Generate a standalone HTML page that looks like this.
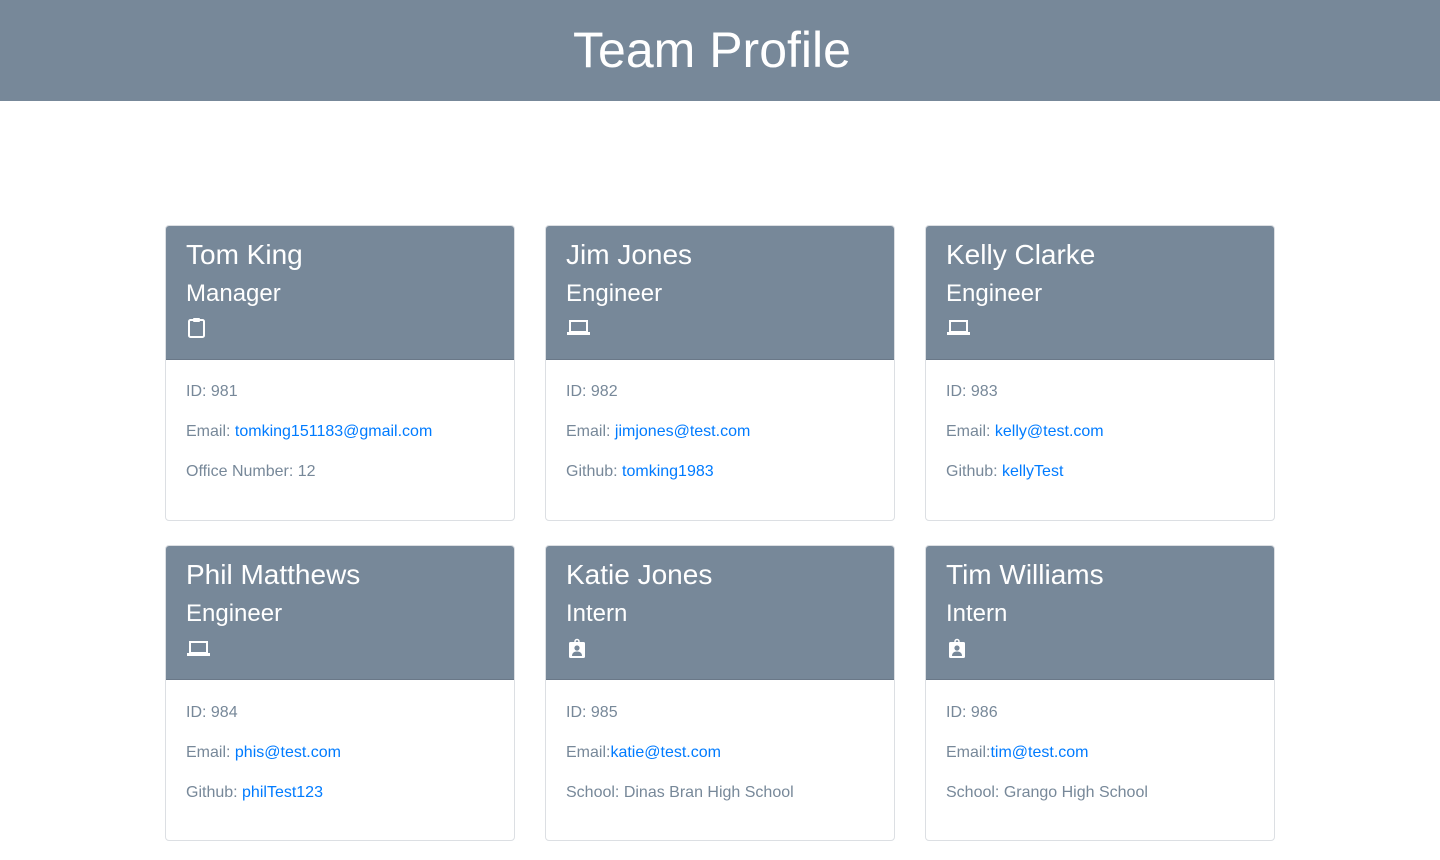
<!DOCTYPE html>
<html><head><meta charset="utf-8"><style>
body{margin:0;font-family:"Liberation Sans",Arial,sans-serif;background:#fff;}
.top{height:101px;background:#778899;color:#fff;text-align:center;font-size:50px;line-height:100px;padding-right:16px;}
.grid{position:relative;}
.card{position:absolute;width:348px;height:294px;border:1px solid #dcdfe3;border-radius:4px;overflow:hidden;}
.hd{background:#778899;color:#fff;height:133px;padding-left:20px;border-bottom:1px solid #6a7888;position:relative;}
.n{position:absolute;top:13px;font-size:28px;}
.r{position:absolute;top:54px;font-size:24px;}
.ic{position:absolute;top:91px;left:21px;}
.bd{padding-left:20px;color:#778899;font-size:16px;position:relative;}
.bd div{position:absolute;left:20px;}
a{color:#007bff;text-decoration:none;}
</style></head><body>
<div class="top">Team Profile</div>
<div class="grid">
<div class="card" style="left:165px;top:124px">
<div class="hd"><div class="n">Tom King</div><div class="r">Manager</div>
<svg class="ic" width="20" height="22" viewBox="0 0 20 22"><rect x="2" y="3" width="15" height="17" rx="1.5" fill="none" stroke="#fff" stroke-width="2"/><rect x="6" y="1" width="7" height="4" rx="1" fill="#fff"/></svg></div>
<div class="bd"><div style="top:23px">ID: 981</div><div style="top:63px">Email: <a>tomking151183@gmail.com</a></div><div style="top:103px">Office Number: 12</div></div></div>
<div class="card" style="left:545px;top:124px">
<div class="hd"><div class="n">Jim Jones</div><div class="r">Engineer</div>
<svg class="ic" width="24" height="20" viewBox="0 0 24 20"><rect x="3" y="4" width="17" height="11" fill="none" stroke="#fff" stroke-width="2"/><rect x="0" y="15" width="23" height="3" fill="#fff"/></svg></div>
<div class="bd"><div style="top:23px">ID: 982</div><div style="top:63px">Email: <a>jimjones@test.com</a></div><div style="top:103px">Github: <a>tomking1983</a></div></div></div>
<div class="card" style="left:925px;top:124px">
<div class="hd"><div class="n">Kelly Clarke</div><div class="r">Engineer</div>
<svg class="ic" width="24" height="20" viewBox="0 0 24 20"><rect x="3" y="4" width="17" height="11" fill="none" stroke="#fff" stroke-width="2"/><rect x="0" y="15" width="23" height="3" fill="#fff"/></svg></div>
<div class="bd"><div style="top:23px">ID: 983</div><div style="top:63px">Email: <a>kelly@test.com</a></div><div style="top:103px">Github: <a>kellyTest</a></div></div></div>
<div class="card" style="left:165px;top:444px">
<div class="hd"><div class="n">Phil Matthews</div><div class="r">Engineer</div>
<svg class="ic" width="24" height="20" viewBox="0 0 24 20" style="top:92px"><rect x="3" y="4" width="17" height="11" fill="none" stroke="#fff" stroke-width="2"/><rect x="0" y="15" width="23" height="3" fill="#fff"/></svg></div>
<div class="bd"><div style="top:24px">ID: 984</div><div style="top:64px">Email: <a>phis@test.com</a></div><div style="top:104px">Github: <a>philTest123</a></div></div></div>
<div class="card" style="left:545px;top:444px">
<div class="hd"><div class="n">Katie Jones</div><div class="r">Intern</div>
<svg class="ic" width="20" height="22" viewBox="0 0 20 22" style="top:92px"><rect x="2" y="4" width="16" height="16" rx="1.5" fill="#fff"/><circle cx="10" cy="3.5" r="2" fill="none" stroke="#fff" stroke-width="1.5"/><circle cx="10" cy="10" r="2.6" fill="#778899"/><path d="M5 18c0-3 2-4.5 5-4.5s5 1.5 5 4.5z" fill="#778899"/></svg></div>
<div class="bd"><div style="top:24px">ID: 985</div><div style="top:64px">Email:<a>katie@test.com</a></div><div style="top:104px">School: Dinas Bran High School</div></div></div>
<div class="card" style="left:925px;top:444px">
<div class="hd"><div class="n">Tim Williams</div><div class="r">Intern</div>
<svg class="ic" width="20" height="22" viewBox="0 0 20 22" style="top:92px"><rect x="2" y="4" width="16" height="16" rx="1.5" fill="#fff"/><circle cx="10" cy="3.5" r="2" fill="none" stroke="#fff" stroke-width="1.5"/><circle cx="10" cy="10" r="2.6" fill="#778899"/><path d="M5 18c0-3 2-4.5 5-4.5s5 1.5 5 4.5z" fill="#778899"/></svg></div>
<div class="bd"><div style="top:24px">ID: 986</div><div style="top:64px">Email:<a>tim@test.com</a></div><div style="top:104px">School: Grango High School</div></div></div>
</div>
</body></html>
